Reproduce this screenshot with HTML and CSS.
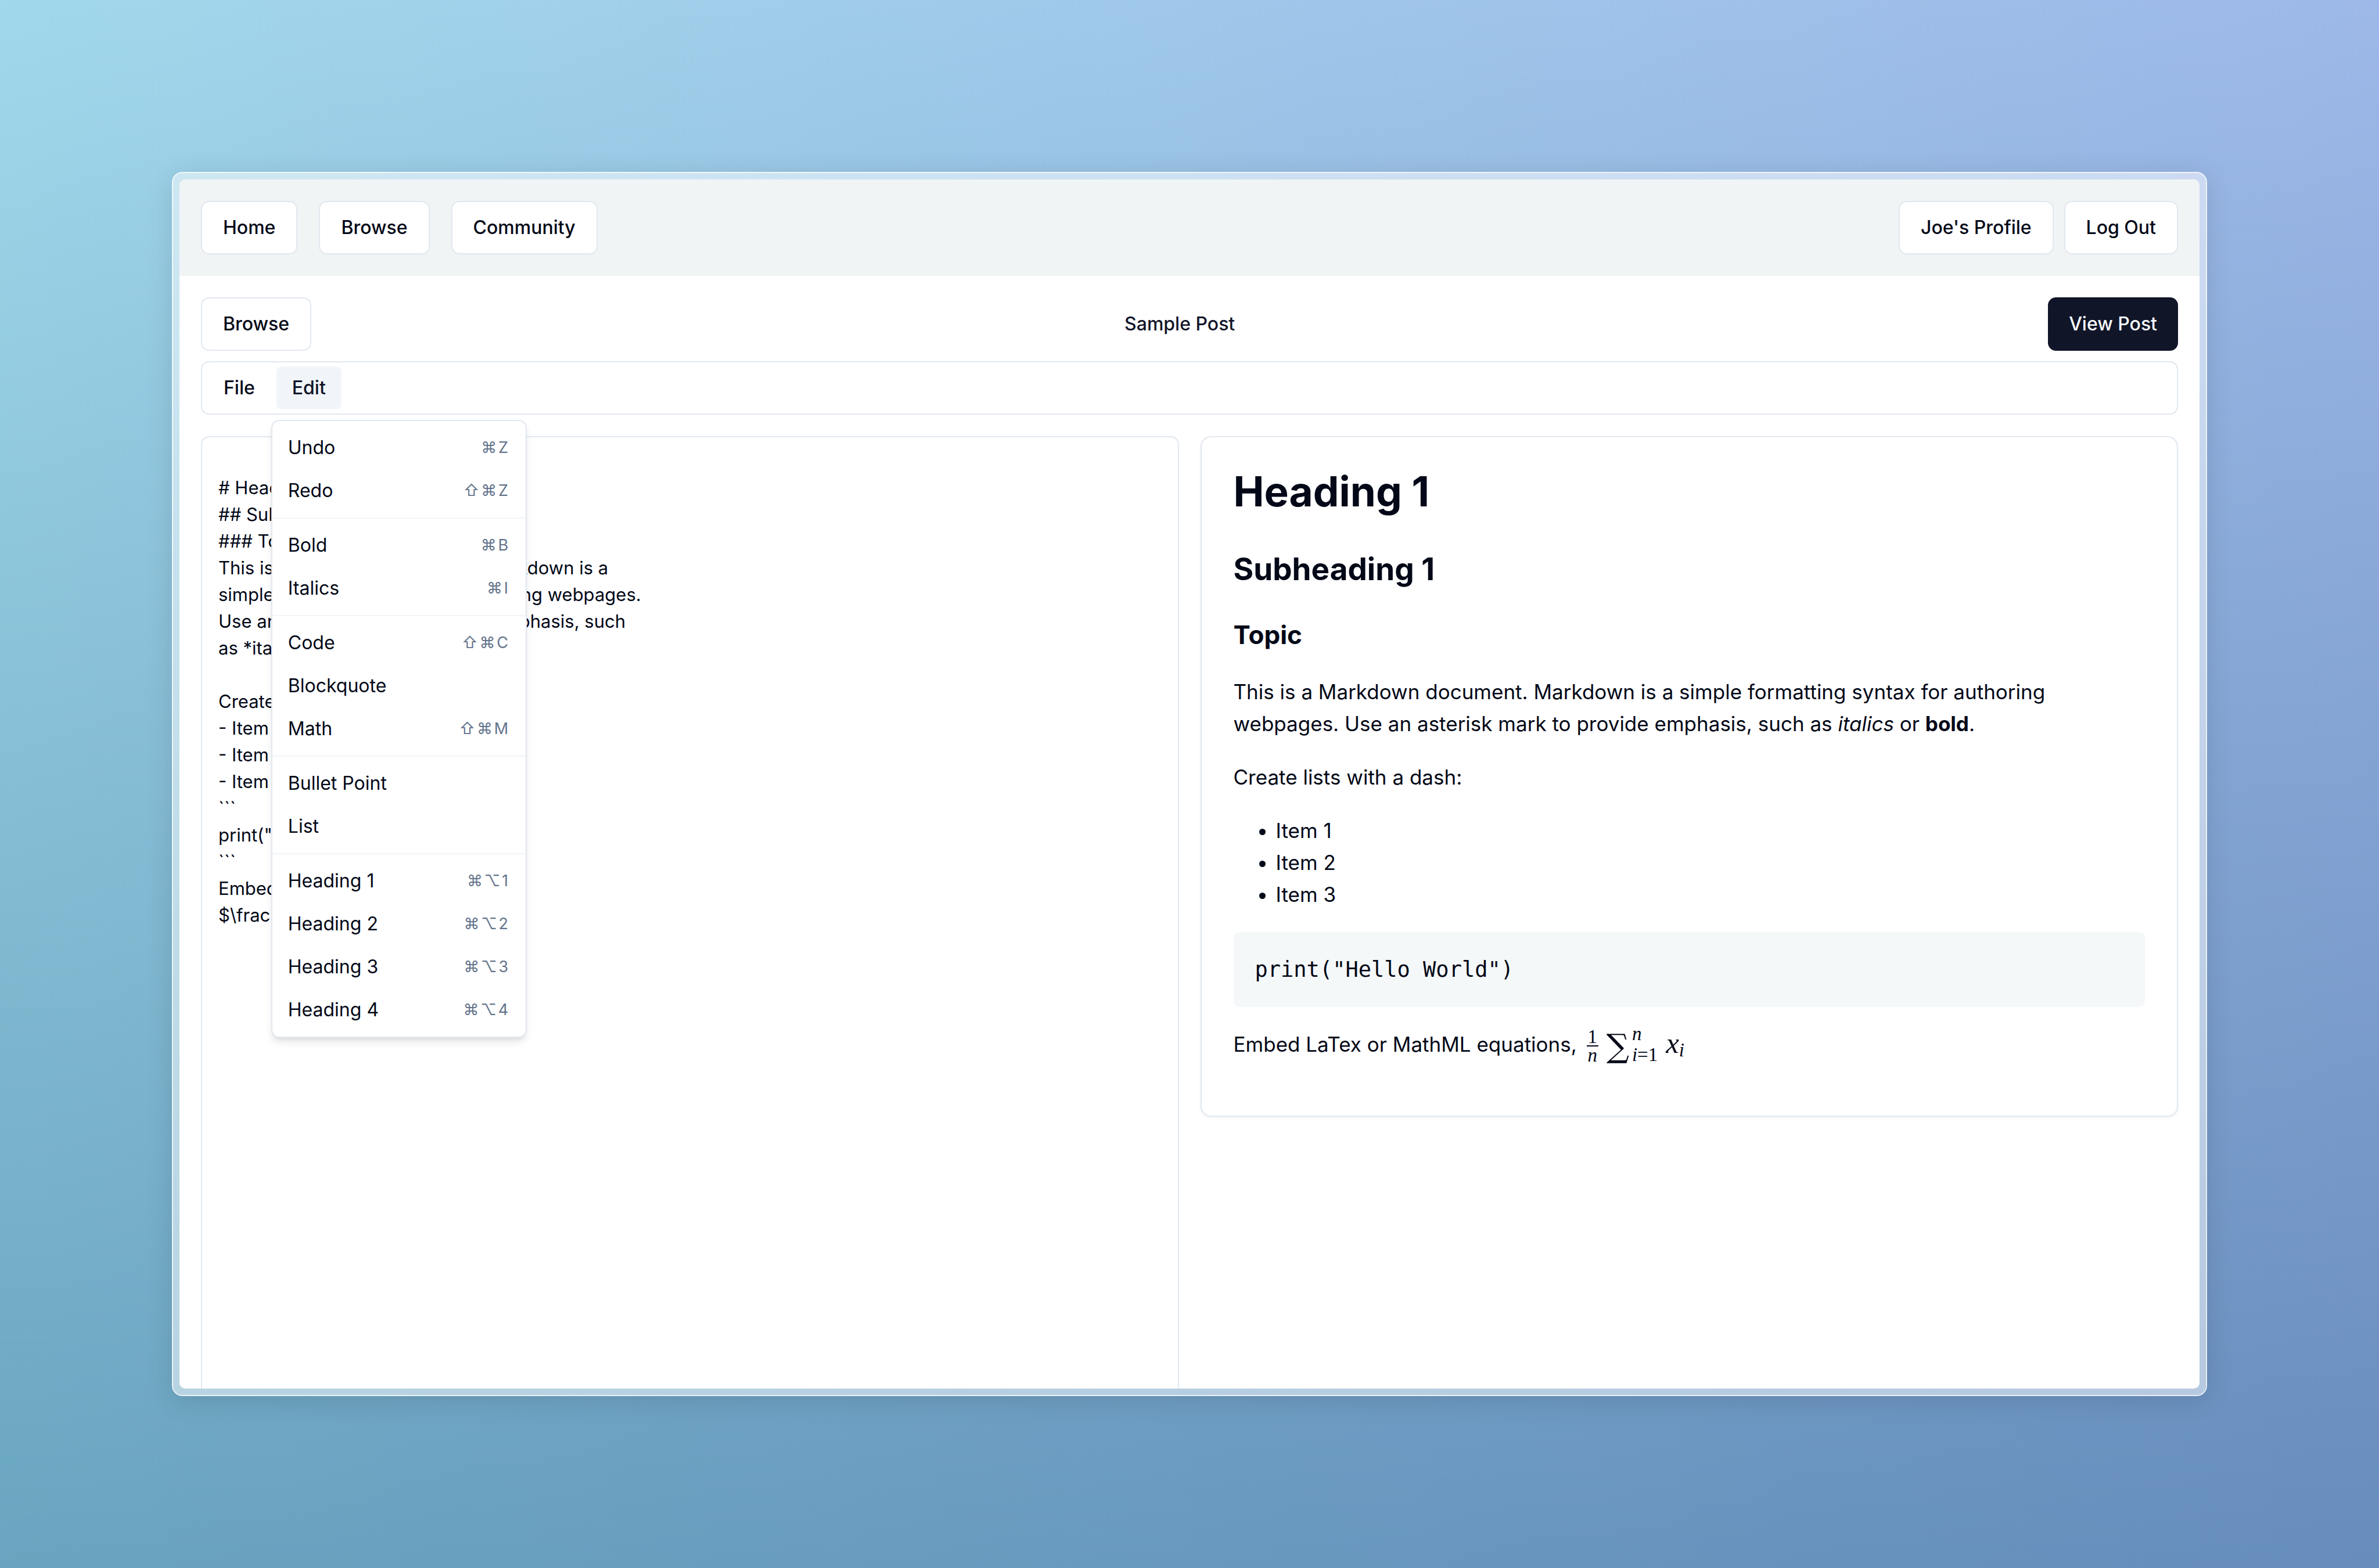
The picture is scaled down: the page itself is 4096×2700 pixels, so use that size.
FILE: index.html
```html
<!DOCTYPE html>
<html lang="en">
<head>
<meta charset="utf-8">
<title>Sample Post</title>
<link rel="stylesheet" href="styles.css">
</head>
<body>
<div class="frame">
  <div class="app">
    <header class="site-header">
      <nav class="nav-main" aria-label="Main">
        <a class="btn" href="#home">Home</a>
        <a class="btn" href="#browse">Browse</a>
        <a class="btn" href="#community">Community</a>
      </nav>
      <div class="nav-user">
        <a class="btn" href="#profile">Joe's Profile</a>
        <button class="btn" type="button">Log Out</button>
      </div>
    </header>
    <main class="main">
      <div class="post-bar">
        <a class="btn" href="#browse">Browse</a>
        <h1 class="post-title">Sample Post</h1>
        <button class="btn btn-primary" type="button">View Post</button>
      </div>
      <div class="menubar" role="menubar">
        <div class="menu">
          <button class="menu-trigger" type="button" role="menuitem">File</button>
        </div>
        <div class="menu">
          <button class="menu-trigger is-open" type="button" role="menuitem" aria-expanded="true">Edit</button>
          <div class="dropdown" role="menu">
            <button class="item" type="button" role="menuitem">Undo<kbd>⌘Z</kbd></button>
            <button class="item" type="button" role="menuitem">Redo<kbd>⇧⌘Z</kbd></button>
            <hr class="sep">
            <button class="item" type="button" role="menuitem">Bold<kbd>⌘B</kbd></button>
            <button class="item" type="button" role="menuitem">Italics<kbd>⌘I</kbd></button>
            <hr class="sep">
            <button class="item" type="button" role="menuitem">Code<kbd>⇧⌘C</kbd></button>
            <button class="item" type="button" role="menuitem">Blockquote</button>
            <button class="item" type="button" role="menuitem">Math<kbd>⇧⌘M</kbd></button>
            <hr class="sep">
            <button class="item" type="button" role="menuitem">Bullet Point</button>
            <button class="item" type="button" role="menuitem">List</button>
            <hr class="sep">
            <button class="item" type="button" role="menuitem">Heading 1<kbd>⌘⌥1</kbd></button>
            <button class="item" type="button" role="menuitem">Heading 2<kbd>⌘⌥2</kbd></button>
            <button class="item" type="button" role="menuitem">Heading 3<kbd>⌘⌥3</kbd></button>
            <button class="item" type="button" role="menuitem">Heading 4<kbd>⌘⌥4</kbd></button>
          </div>
        </div>
      </div>
      <div class="panes">
        <textarea class="editor" aria-label="Markdown source" spellcheck="false">

# Heading 1
## Subheading 1
### Topic
This is a Markdown document. Markdown is a
simple formatting syntax for authoring webpages.
Use an asterisk mark to provide emphasis, such
as *italics* or **bold**.

Create lists with a dash:
- Item 1
- Item 2
- Item 3
&#96;&#96;&#96;
print("Hello World")
&#96;&#96;&#96;
Embed LaTex or MathML equations,
$\frac{1}{n}\sum_{i=1}^{n}x_i$</textarea>
        <article class="preview">
          <h1>Heading 1</h1>
          <h2>Subheading 1</h2>
          <h3>Topic</h3>
          <p>This is a Markdown document. Markdown is a simple formatting syntax for authoring webpages. Use an asterisk mark to provide emphasis, such as <em>italics</em> or <strong>bold</strong>.</p>
          <p>Create lists with a dash:</p>
          <ul>
            <li>Item 1</li>
            <li>Item 2</li>
            <li>Item 3</li>
          </ul>
          <pre><code>print("Hello World")</code></pre>
          <p>Embed LaTex or MathML equations, <span class="eq"><span class="frac"><span>1</span><i>n</i></span><span class="sum">∑</span><span class="limits"><i>n</i><span><i>i</i>=1</span></span><span class="term"><i>x</i><sub>i</sub></span></span></p>
        </article>
      </div>
    </main>
  </div>
</div>
</body>
</html>
```
FILE: styles.css
```css
*,
*::before,
*::after {
  box-sizing: border-box;
}

:root {
  --ink: #020817;
  --ink-soft: #101528;
  --muted: #64748b;
  --line: #e2e8f0;
  --accent: #f1f5f9;
  --radius: 14px;
}

body {
  margin: 0;
  height: 100vh;
  padding: 296px;
  display: flex;
  background-image:
    linear-gradient(to bottom, #ffffff, #a7c6d0),
    linear-gradient(100deg, #a1d8eb, #a0cbea 35%, #9db5e8);
  background-blend-mode: multiply;
  font-family: Inter, "Liberation Sans", sans-serif;
  font-size: 32px;
  line-height: 46px;
  color: var(--ink);
}

button,
textarea,
kbd {
  font: inherit;
  color: inherit;
}

.frame {
  flex: 1;
  min-width: 0;
  display: flex;
  padding: 11px;
  border: 2px solid rgba(255, 255, 255, 0.85);
  border-radius: 18px;
  background: rgba(255, 255, 255, 0.5);
  background-clip: padding-box;
  box-shadow: 0 8px 48px rgba(0, 0, 0, 0.12);
}

.app {
  flex: 1;
  min-width: 0;
  overflow: hidden;
  border-radius: 10px;
  background: #ffffff;
}

.site-header {
  display: flex;
  justify-content: space-between;
  padding: 37px;
  background: #f0f4f5;
}

.nav-main {
  display: flex;
  gap: 37px;
}

.nav-user {
  display: flex;
  gap: 18px;
}

.btn {
  display: flex;
  align-items: center;
  height: 92px;
  padding: 0 36px;
  border: 2px solid var(--line);
  border-radius: var(--radius);
  background: #ffffff;
  font-weight: 500;
  color: var(--ink);
  text-decoration: none;
  white-space: nowrap;
}

.btn-primary {
  border: 0;
  background: var(--ink-soft);
  color: #f8fafc;
}

.main {
  padding: 37px;
}

.post-bar {
  display: flex;
  align-items: center;
  justify-content: space-between;
  margin-bottom: 18px;
}

.post-title {
  margin: 0;
  font-size: 32px;
  font-weight: 500;
  color: var(--ink-soft);
}

.menubar {
  display: flex;
  align-items: center;
  gap: 10px;
  height: 92px;
  padding: 0 10px;
  margin-bottom: 37px;
  border: 2px solid var(--line);
  border-radius: var(--radius);
}

.menu {
  position: relative;
}

.menu-trigger {
  display: block;
  padding: 14px 27px;
  border: 0;
  border-radius: 9px;
  background: none;
  font-weight: 500;
}

.menu-trigger.is-open {
  background: var(--accent);
  color: var(--ink-soft);
}

.dropdown {
  position: absolute;
  top: calc(100% + 18px);
  left: -9px;
  z-index: 1;
  width: 440px;
  padding: 9px;
  border: 2px solid var(--line);
  border-radius: var(--radius);
  background: #ffffff;
  box-shadow: 0 9px 14px -2px rgba(0, 0, 0, 0.1), 0 5px 9px -5px rgba(0, 0, 0, 0.1);
}

.item {
  display: flex;
  align-items: center;
  justify-content: space-between;
  width: 100%;
  padding: 14px 18px;
  border: 0;
  background: none;
  text-align: left;
}

.item kbd {
  font-size: 27px;
  line-height: 46px;
  letter-spacing: 0.1em;
  color: var(--muted);
}

.sep {
  height: 2px;
  margin: 9px -9px;
  border: 0;
  background: var(--accent);
}

.panes {
  display: grid;
  grid-template-columns: 1fr 1fr;
  align-items: start;
  gap: 37px;
}

.editor {
  display: block;
  width: 100%;
  height: 1840px;
  padding: 18px 28px;
  border: 2px solid var(--line);
  border-radius: var(--radius);
  background: #ffffff;
  font-size: 31px;
  resize: none;
}

.preview {
  padding: 55px;
  border: 2px solid var(--line);
  border-radius: 18px;
  box-shadow: 0 2px 5px rgba(0, 0, 0, 0.05);
  font-size: 35px;
  line-height: 55px;
}

.preview h1 {
  margin: 0 0 64px;
  font-size: 71px;
  line-height: 76px;
  font-weight: 700;
}

.preview h2 {
  margin: 0 0 49px;
  font-size: 53px;
  line-height: 64px;
  font-weight: 700;
}

.preview h3 {
  margin: 0 0 39px;
  font-size: 44px;
  line-height: 64px;
  font-weight: 700;
}

.preview p {
  margin: 0 0 37px;
}

.preview ul {
  margin: 0 0 37px;
  padding-left: 73px;
}

.preview pre {
  margin: 0 0 37px;
  padding: 37px;
  border-radius: 9px;
  background: #f5f8f9;
  font-family: "DejaVu Sans Mono", monospace;
  font-size: 37px;
}

.preview code {
  font: inherit;
}

.eq {
  display: inline-flex;
  align-items: center;
  height: 55px;
  margin-left: 7px;
  vertical-align: middle;
  font-family: "Liberation Serif", serif;
  font-size: 33px;
}

.frac {
  display: flex;
  flex-direction: column;
  align-items: center;
  width: 20px;
  line-height: 30px;
}

.frac > :first-child {
  align-self: stretch;
  border-bottom: 2px solid var(--ink);
  text-align: center;
}

.sum {
  margin: 0 5px 0 14px;
  font-family: "DejaVu Serif", serif;
  font-size: 55px;
  line-height: 55px;
}

.limits {
  display: flex;
  flex-direction: column;
  padding-bottom: 6px;
  line-height: 36px;
}

.term {
  margin-left: 14px;
  padding-bottom: 8px;
  font-size: 51px;
  line-height: 55px;
}

.term sub {
  font-size: 33px;
  line-height: 33px;
  font-style: italic;
  vertical-align: -6px;
}
```
